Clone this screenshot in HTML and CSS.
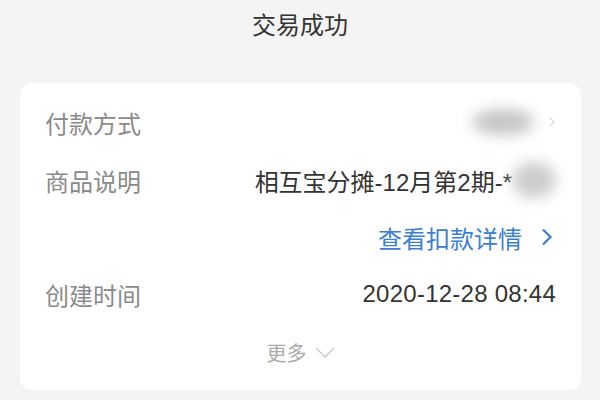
FILE: index.html
```html
<!DOCTYPE html>
<html>
<head>
<meta charset="utf-8">
<link rel="stylesheet" href="styles.css">
</head>
<body>
<div class="page">
  <header class="title">交易成功</header>
  <section class="card">
    <div class="row">
      <span class="label">付款方式</span>
      <span class="value masked">
        <span class="blur blur-pay"></span>
        <svg class="tiny-chev" width="6" height="10" viewBox="0 0 6 10"><path d="M1 1 L5 5 L1 9" fill="none" stroke="#d8d8d8" stroke-width="1.2"/></svg>
      </span>
    </div>
    <div class="row">
      <span class="label">商品说明</span>
      <span class="value">相互宝分摊-12月第2期-*<span class="blur blur-name"></span></span>
    </div>
    <div class="row row-link">
      <a class="link">查看扣款详情
        <svg class="chev" width="12" height="18" viewBox="0 0 12 18"><path d="M2 1.5 L9.5 9 L2 16.5" fill="none" stroke="#3a80d2" stroke-width="2.2"/></svg>
      </a>
    </div>
    <div class="row">
      <span class="label">创建时间</span>
      <span class="value date">2020-12-28 08:44</span>
    </div>
    <div class="more">更多
      <svg class="down" width="20" height="11" viewBox="0 0 20 11"><path d="M1 1 L10 10 L19 1" fill="none" stroke="#c8c8c8" stroke-width="1.3"/></svg>
    </div>
  </section>
</div>
</body>
</html>
```

FILE: styles.css
```css
html, body {
  margin: 0;
  padding: 0;
  background: #f4f4f4;
}
body {
  font-family: "Liberation Sans", "Noto Sans CJK SC", sans-serif;
  width: 600px;
  height: 400px;
  overflow: hidden;
}
.page {
  display: flex;
  flex-direction: column;
  align-items: stretch;
}
.title {
  height: 83px;
  box-sizing: border-box;
  padding-top: 11px;
  text-align: center;
  font-size: 24px;
  line-height: 30px;
  color: #333;
}
.card {
  margin: 0 19px 0 20px;
  background: #fff;
  border-radius: 12px;
  padding: 10px 25px 9px 25px;
  display: flex;
  flex-direction: column;
}
.row {
  height: 58px;
  display: flex;
  align-items: center;
  justify-content: space-between;
}
.label {
  font-size: 24px;
  color: #8a8a8a;
}
.value {
  font-size: 24px;
  color: #333;
  display: flex;
  align-items: center;
}
.date {
  letter-spacing: 0.25px;
}
.masked {
  position: relative;
  width: 90px;
  height: 40px;
  justify-content: flex-end;
}
.blur {
  display: inline-block;
  background: #c9c9c9;
  filter: blur(7px);
  border-radius: 50%;
}
.blur-pay {
  position: absolute;
  left: 6px;
  top: 7px;
  width: 62px;
  height: 26px;
  background: #c6c6c6;
}
.tiny-chev {
  margin-right: 1px;
}
.blur-name {
  width: 44px;
  height: 36px;
  margin-left: 0;
  background: #cdcdcd;
}
.row-link {
  justify-content: flex-end;
  height: 56px;
}
.link {
  font-size: 24px;
  color: #3a80d2;
  display: flex;
  align-items: center;
}
.chev {
  margin-left: 19px;
  margin-right: 3px;
}
.more {
  height: 58px;
  display: flex;
  align-items: center;
  justify-content: center;
  font-size: 20px;
  color: #aaa;
}
.down {
  margin-left: 8px;
}
```
